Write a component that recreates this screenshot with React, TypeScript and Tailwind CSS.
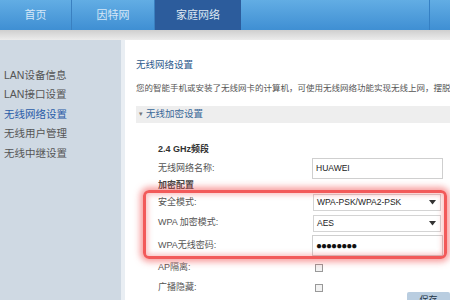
const menu = ["LAN设备信息", "LAN接口设置", "无线网络设置", "无线用户管理", "无线中继设置"];

const Caret = () => (
  <svg width="7" height="5" viewBox="0 0 7 5" className="ml-auto mr-1">
    <path d="M0 0 H7 L3.5 4.5 Z" fill="#333" />
  </svg>
);

const App = () => {
  return (
    <div
      className="w-[450px] h-[300px] overflow-hidden bg-white relative"
      style={{ fontFamily: '"Liberation Sans", "Noto Sans CJK SC", sans-serif' }}
    >
      {/* top nav */}
      <div className="h-[30px] flex bg-gradient-to-b from-[#62ade4] to-[#3f8fd3] text-[11px] text-[#d6e8f7]">
        <div className="w-[72px] flex items-center justify-center border-r border-[#3a80c0]">首页</div>
        <div className="w-[83px] flex items-center justify-center border-r border-[#3a80c0]">因特网</div>
        <div className="w-[86px] flex items-center justify-center bg-[#2c5c9c] text-[#dfe8f3]">家庭网络</div>
        <div className="w-[189px] border-r border-[#3580c4]" />
        <div className="flex-1" />
      </div>
      <div className="h-[10px] bg-gradient-to-b from-[#cfcfcf] to-[#ececec]" />

      <div className="flex h-[260px]">
        {/* sidebar */}
        <div className="w-[121px] bg-[#cfd9e3] pt-[26px] pl-[4px] flex flex-col text-[10.5px] text-[#555]">
          {menu.map((m) => (
            <div
              key={m}
              className={`h-[19.5px] flex items-center ${m === "无线网络设置" ? "text-[#2a5ca8]" : ""}`}
            >
              {m}
            </div>
          ))}
        </div>
        <div className="w-[4px] bg-[#e9eef3]" />

        {/* content */}
        <div className="flex-1 pl-[11px] text-[9px] text-[#555] whitespace-nowrap overflow-hidden">
          <div className="h-[16px] mt-[17px] flex items-center text-[#2c5a8c] text-[9.5px]">无线网络设置</div>
          <div className="h-[14px] mt-[8px] flex items-center text-[8.5px]">
            您的智能手机或安装了无线网卡的计算机，可使用无线网络功能实现无线上网，摆脱网线的束缚
          </div>
          <div className="h-[17px] mt-[11px] bg-[#eeeeee] flex items-center pl-[3px] text-[#3a6898] text-[9.5px]">
            <span className="text-[7px] mr-[3px] text-[#777]">▾</span>无线加密设置
          </div>

          <div className="pl-[22px] pr-[7px] mt-[19px] flex flex-col">
            <div className="h-[16px] flex items-center font-bold text-[#333]">2.4 GHz频段</div>
            <div className="h-[21px] flex items-center">
              <div className="w-[154px]">无线网络名称:</div>
              <div className="flex-1 h-[21px] border border-[#cfcfcf] flex items-center pl-[3px] text-[#222] text-[8.5px]">HUAWEI</div>
            </div>
            <div className="h-[14px] flex items-center font-bold text-[#444]">加密配置</div>
            <div className="h-[19px] flex items-center">
              <div className="w-[155px]">安全模式:</div>
              <div className="w-[128px] h-[17px] border border-[#d4d4d4] flex items-center pl-[3px] text-[#222] text-[8.5px]">
                WPA-PSK/WPA2-PSK
                <Caret />
              </div>
            </div>
            <div className="h-[22px] flex items-center">
              <div className="w-[155px]">WPA 加密模式:</div>
              <div className="w-[128px] h-[17px] border border-[#d4d4d4] flex items-center pl-[3px] text-[#222] text-[8.5px]">
                AES
                <Caret />
              </div>
            </div>
            <div className="h-[23px] flex items-center">
              <div className="w-[154px]">WPA无线密码:</div>
              <div className="flex-1 h-[21px] border border-[#cfcfcf] flex items-center pl-[3px] text-[#111] text-[10px] tracking-[-1px]">
                ●●●●●●●●
              </div>
            </div>
            <div className="h-[21px] flex items-center">
              <div className="w-[157px]">AP隔离:</div>
              <div className="w-[8px] h-[8px] border border-[#999] bg-[#f2f2f2]" />
            </div>
            <div className="h-[19px] flex items-center">
              <div className="w-[157px]">广播隐藏:</div>
              <div className="w-[8px] h-[8px] border border-[#999] bg-[#f2f2f2]" />
            </div>
            <div className="flex justify-end -mr-[7px] -mt-[5px]">
              <div className="w-[43px] h-[14px] bg-[#b9cde0] rounded-t-[2px] flex justify-center pt-[2px] text-[9px] text-[#234]">保存</div>
            </div>
          </div>
        </div>
      </div>

      {/* red annotation */}
      <div className="absolute left-[143px] top-[190px] w-[304px] h-[69px] rounded-[6px] border-[3px] border-[#f25a5a] shadow-[0_0_6px_3px_rgba(240,80,80,0.55),inset_0_0_5px_2px_rgba(240,80,80,0.35)] pointer-events-none" />
    </div>
  );
};

export default App;
